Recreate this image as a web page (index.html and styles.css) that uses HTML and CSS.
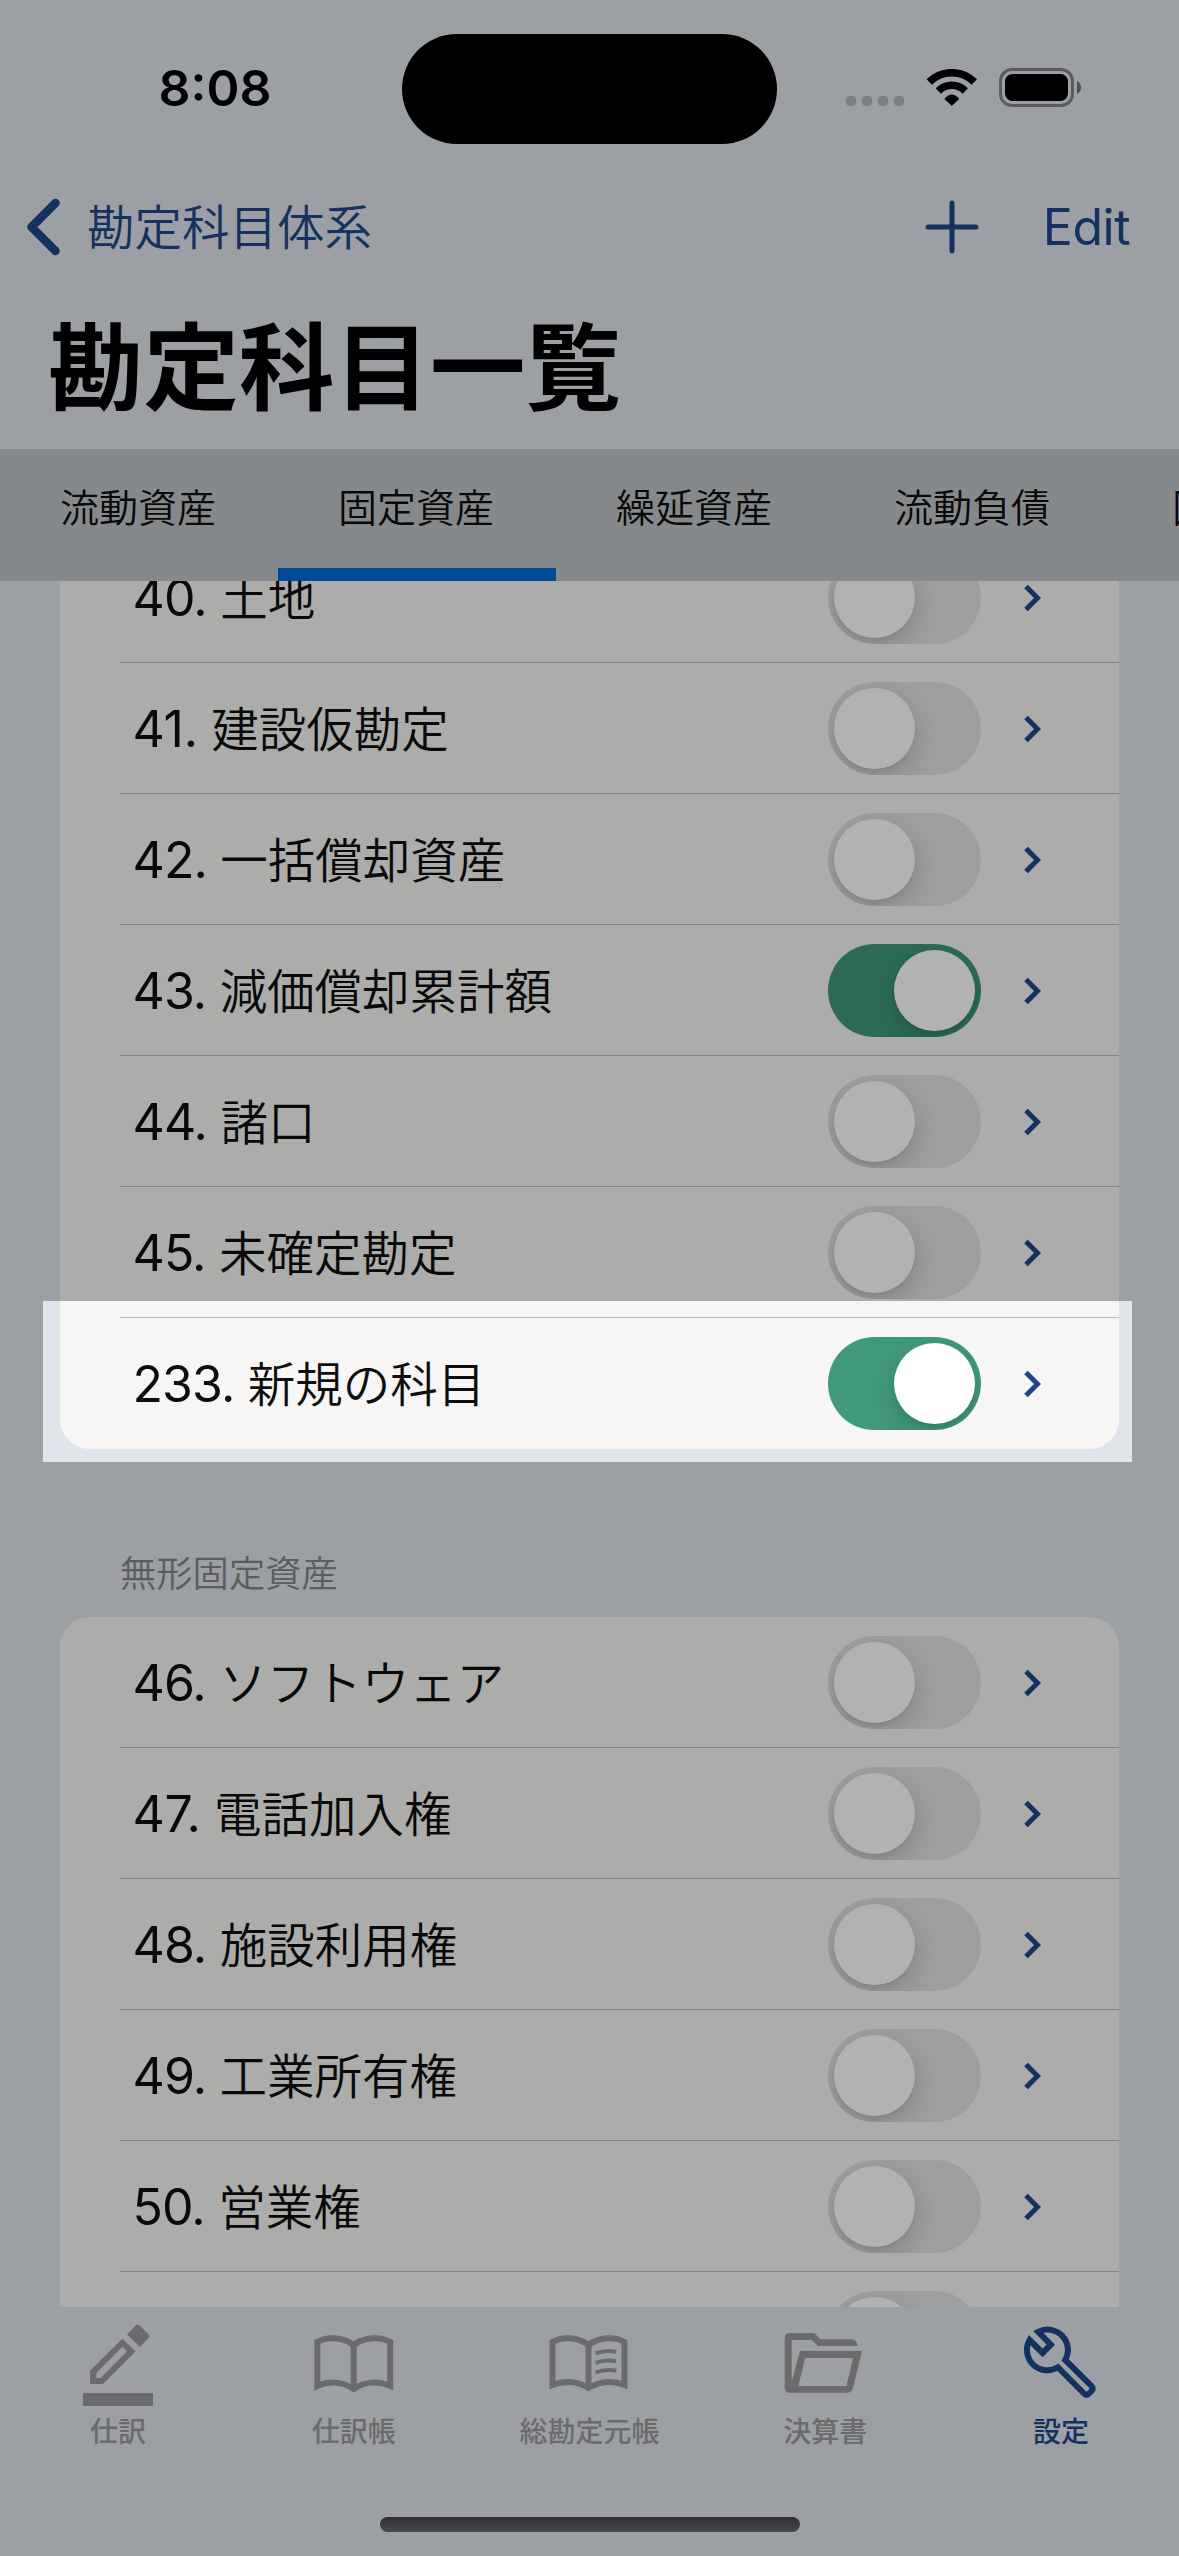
FILE: index.html
```html
<!DOCTYPE html>
<html lang="ja">
<head>
<meta charset="utf-8">
<title>勘定科目一覧</title>
<link rel="stylesheet" href="styles.css">
</head>
<body>
<svg class="defs" aria-hidden="true">
  <symbol id="chevron" viewBox="0 0 17 28"><path d="M2 2.500 L13.500 14 L2 25.500" fill="none" stroke="currentColor" stroke-width="5"/></symbol>
</svg>
<div class="screen">
  <header class="status">
    <div class="time">8:08</div>
    <div class="island"></div>
    <div class="indicators">
      <div class="dots"><i></i><i></i><i></i><i></i></div>
      <svg class="wifi" width="52" height="37" viewBox="0 0 52 37">
        <path d="M3.300 13 A31.800 31.800 0 0 1 48.300 13" fill="none" stroke="#000" stroke-width="7.500"/>
        <path d="M12.300 22 A19 19 0 0 1 39.300 22" fill="none" stroke="#000" stroke-width="7.500"/>
        <path d="M18.300 30 Q25.800 21 33.300 30 L25.800 36.800 Z"/>
      </svg>
      <svg width="83" height="39" viewBox="0 0 83 39">
        <rect x="1.500" y="1.500" width="72" height="36" rx="11.500" fill="none" stroke="#000" stroke-opacity=".42" stroke-width="3"/>
        <rect x="6" y="6" width="63" height="27" rx="7.500"/>
        <path d="M78 13 Q82 15 82 19.500 Q82 24 78 26 Z" fill-opacity=".5"/>
      </svg>
    </div>
  </header>

  <nav class="navbar">
    <svg class="back" width="34" height="58" viewBox="0 0 34 58"><path d="M29.500 5 L5.500 29 L29.500 53" fill="none" stroke="currentColor" stroke-width="8.500" stroke-linecap="round" stroke-linejoin="round"/></svg>
    <span class="back-label">勘定科目体系</span>
    <svg class="add" width="54" height="54" viewBox="0 0 54 54"><path d="M27 3 V51 M3 27 H51" stroke="currentColor" stroke-width="5" stroke-linecap="round"/></svg>
    <span class="edit">Edit</span>
  </nav>
  <h1 class="title">勘定科目一覧</h1>

  <div class="segments">
    <div class="segment">流動資産</div>
    <div class="segment active">固定資産</div>
    <div class="segment">繰延資産</div>
    <div class="segment">流動負債</div>
    <div class="segment">固定負債</div>
  </div>

  <main class="list">
    <section class="card first">
      <div class="row"><span class="label"><b>40.</b> 土地</span><span class="toggle"></span><svg class="chev"><use href="#chevron"/></svg></div>
      <div class="row"><span class="label"><b class="narrow">41.</b> 建設仮勘定</span><span class="toggle"></span><svg class="chev"><use href="#chevron"/></svg></div>
      <div class="row"><span class="label"><b>42.</b> 一括償却資産</span><span class="toggle"></span><svg class="chev"><use href="#chevron"/></svg></div>
      <div class="row"><span class="label"><b>43.</b> 減価償却累計額</span><span class="toggle on"></span><svg class="chev"><use href="#chevron"/></svg></div>
      <div class="row"><span class="label"><b>44.</b> 諸口</span><span class="toggle"></span><svg class="chev"><use href="#chevron"/></svg></div>
      <div class="row"><span class="label"><b>45.</b> 未確定勘定</span><span class="toggle"></span><svg class="chev"><use href="#chevron"/></svg></div>
      <div class="row"><span class="label"><b>233.</b> 新規の科目</span><span class="toggle on"></span><svg class="chev"><use href="#chevron"/></svg></div>
    </section>
    <h2 class="section-title">無形固定資産</h2>
    <section class="card">
      <div class="row"><span class="label"><b>46.</b> ソフトウェア</span><span class="toggle"></span><svg class="chev"><use href="#chevron"/></svg></div>
      <div class="row"><span class="label"><b class="narrow">47.</b> 電話加入権</span><span class="toggle"></span><svg class="chev"><use href="#chevron"/></svg></div>
      <div class="row"><span class="label"><b>48.</b> 施設利用権</span><span class="toggle"></span><svg class="chev"><use href="#chevron"/></svg></div>
      <div class="row"><span class="label"><b>49.</b> 工業所有権</span><span class="toggle"></span><svg class="chev"><use href="#chevron"/></svg></div>
      <div class="row"><span class="label"><b>50.</b> 営業権</span><span class="toggle"></span><svg class="chev"><use href="#chevron"/></svg></div>
      <div class="row"><span class="label"></span><span class="toggle"></span><svg class="chev"><use href="#chevron"/></svg></div>
    </section>
  </main>

  <footer class="tabbar">
    <div class="tab">
      <svg viewBox="0 0 100 90"><path fill-rule="evenodd" d="M22 64 V50.700 L54.300 18.700 L67.700 31.300 L35 64 Z M28.300 58 V53.300 L54.300 27 L59 31.300 L32.700 58 Z"/><path d="M59 14.300 L67.500 5.800 Q69.700 3.800 72 5.800 L80.300 14 Q82.300 16.300 80.300 18.500 L71.700 27 Z"/><path d="M15 73 H85 V86 H15 Z"/></svg>
      <span>仕訳</span>
    </div>
    <div class="tab">
      <svg viewBox="0 0 100 90"><path class="line" d="M49.700 25 C39 17 23 16 13.300 22 V66 C24 61 38 61 49.700 69 C61 61 75 61 86.200 66 V22 C76 16 60 17 49.700 25 V69"/></svg>
      <span>仕訳帳</span>
    </div>
    <div class="tab">
      <svg viewBox="0 0 100 90"><path class="line" d="M49.500 25 C39 17 23 16 13.500 22 V65 C24 60.500 38 60.500 49.500 68 C61 60.500 75 60.500 85.500 65 V22 C76 16 60 17 49.500 25 V68"/><path class="line thin" d="M56.500 33.300 Q67 29.500 77.200 31.700 M56.500 42.800 Q67 39 77.200 41.200 M56.500 52.300 Q67 48.500 77.200 50.700"/></svg>
      <span>総勘定元帳</span>
    </div>
    <div class="tab">
      <svg viewBox="0 0 100 90"><path fill-rule="evenodd" d="M14.700 13 H39.400 L45.400 19.300 H76.400 Q82 20 82.400 26 H43 L36.700 20 H16.700 V61.700 L25 31 H87 L78 68 Q76.500 72.700 72 72.700 H14.700 Q9.700 72.700 9.700 67.700 V18 Q9.700 13 14.700 13 Z M30 38 H78 L71.400 66 H23.400 Z"/></svg>
      <span>決算書</span>
    </div>
    <div class="tab selected">
      <svg viewBox="0 0 100 90"><path class="line" d="M27.200 11.900 L39.800 24.700 L31.600 32.900 L18.600 20 A20.300 20.300 0 0 0 46.900 47.300 L73 73.500 Q75.500 76 78 73.500 L80.500 71 Q83 68.500 80.500 66 L54.200 40 A20.300 20.300 0 0 0 27.200 11.900 Z"/></svg>
      <span>設定</span>
    </div>
  </footer>
  <div class="home-area"><div class="home"></div></div>
  <div class="spotlight"></div>
</div>
</body>
</html>
```
FILE: styles.css
```css
* { box-sizing: border-box; }
body { margin: 0; }
.defs { display: none; }

.screen {
  position: relative;
  display: flex;
  flex-direction: column;
  width: 1179px;
  height: 2556px;
  overflow: hidden;
  background: #e0e4eb;
  color: #0d0e0e;
  font-family: Inter, "Noto Sans CJK JP", sans-serif;
}

/* Status bar */
.status {
  display: grid;
  grid-template-columns: 402px 375px 1fr;
  height: 177px;
  padding-top: 34px;
  align-items: start;
}
.time {
  padding-left: 28px;
  height: 110px;
  line-height: 108px;
  text-align: center;
  font-size: 50px;
  font-weight: 600;
  color: #000;
}
.island { height: 110px; border-radius: 55px; background: #000; }
.indicators { display: flex; padding: 34px 0 0 69px; align-items: flex-start; }
.dots { display: flex; gap: 6px; padding-top: 28px; }
.dots i { width: 10px; height: 10px; border-radius: 4px; background: #b4b7bd; }
.wifi { margin: 1px 21px 0 22px; }

/* Navigation bar */
.navbar {
  display: flex;
  align-items: center;
  height: 100px;
  padding: 0 49px 0 26px;
  color: #1f4788;
}
.back-label { margin-left: 27px; padding-top: 2px; font-size: 47.500px; font-weight: 350; line-height: 100px; }
.add { margin-left: auto; }
.edit { margin-left: 64px; font-size: 50px; line-height: 100px; letter-spacing: -.5px; }
.title {
  margin: 0;
  height: 172px;
  padding: 5px 0 0 48px;
  font-size: 95.500px;
  line-height: 172px;
  font-weight: 700;
  color: #000;
}

/* Category strip */
.segments { display: flex; flex: none; height: 132px; overflow: hidden; background: #c1c5c9; }
.segment {
  flex: none;
  width: 278px;
  height: 132px;
  padding-right: 2px;
  border-bottom: 13px solid transparent;
  text-align: center;
  font-size: 39px;
  font-weight: 350;
  line-height: 118px;
}
.segment.active { border-color: #006adb; }

/* Account list */
.list { height: 1726px; flex: none; padding: 0 60px; overflow: hidden; }
.card { border-radius: 30px; background: #f7f6f5; }
.first { margin-top: -49px; }
.row {
  display: flex;
  align-items: center;
  height: 131px;
  padding: 0 78px 0 72.500px;
  background: linear-gradient(#bdbdbc, #bdbdbc) 60px 100% / 100% 1px no-repeat;
}
.row:last-child { background: none; }
.label { flex: 1; font-size: 47.500px; font-weight: 350; line-height: 130px; padding-top: 1px; white-space: nowrap; }
.label b { font-size: 50px; font-weight: 400; letter-spacing: -.9px; }
.label .narrow { letter-spacing: -.2px; }
.toggle {
  flex: none;
  width: 153px;
  height: 93px;
  padding: 6px;
  border-radius: 47px;
  background: #e2e2e2;
  overflow: hidden;
}
.toggle::before {
  content: "";
  display: block;
  width: 81px;
  height: 81px;
  border-radius: 50%;
  background: #fff;
  box-shadow: 0 9px 24px rgba(0, 0, 0, .16), 0 3px 3px rgba(0, 0, 0, .05);
}
.toggle.on { background: #409978; }
.toggle.on::before { margin-left: auto; }
.chev { flex: none; width: 17px; height: 28px; margin-left: 43px; color: #1f4788; }
.section-title {
  margin: 0;
  height: 168px;
  padding: 80px 0 0 60px;
  font-size: 36.300px;
  font-weight: 350;
  line-height: 90px;
  color: #838488;
}

/* Bottom tabs */
.tabbar { display: grid; grid-template-columns: repeat(5, 1fr); flex: none; height: 165px; padding-top: 13px; color: #9a9a9a; }
.tab { display: flex; flex-direction: column; align-items: center; }
.tab svg { width: 100px; height: 90px; fill: currentColor; }
.tab .line { fill: none; stroke: currentColor; stroke-width: 6; }
.tab .thin { stroke-width: 4; }
.tab span { padding-top: 2px; font-size: 28px; font-weight: 500; line-height: 40px; }
.tab.selected { color: #1f4788; }
.home-area { flex: 1; padding-top: 45px; }
.home { width: 420px; height: 15px; margin: 0 auto; border-radius: 8px; background: linear-gradient(#404144, #6b6c6f); }

/* Dimming layer with a cut-out around the new account */
.spotlight {
  position: absolute;
  left: 43px;
  top: 1301px;
  width: 1089px;
  height: 161px;
  box-shadow: 0 0 0 2600px rgba(0, 0, 0, .3);
}
```
